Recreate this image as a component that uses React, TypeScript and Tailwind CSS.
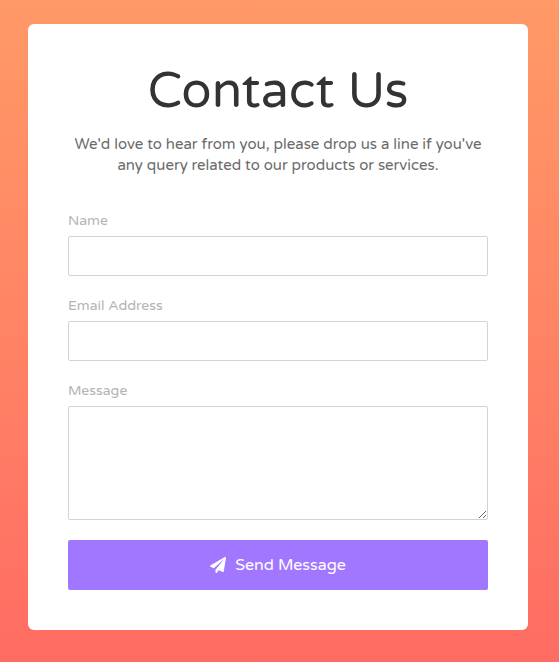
import type { ReactNode } from "react";
import { FaPaperPlane } from "react-icons/fa";

const control =
  "block w-full rounded-xs border border-[#d4d4d4] bg-white px-3 text-[15px] text-[#333] outline-none focus:border-[#a177ff]";

function Field({ id, label, children }: { id: string; label: string; children: ReactNode }) {
  return (
    <div className="flex flex-col gap-[5px]">
      <label htmlFor={id} className="text-sm leading-5 text-[#b4b4b4]">
        {label}
      </label>
      {children}
    </div>
  );
}

export default function App() {
  return (
    <main className="min-h-screen bg-linear-to-b from-[#ff9966] to-[#ff6c63] pt-6 pr-[31px] pb-8 pl-7 font-['Varela_Round','Noto_Sans',sans-serif]">
      <section className="mx-auto max-w-[500px] rounded-md bg-white p-10">
        <h1 className="mb-4 text-center text-[50px] leading-[54px] text-[#333]">
          Contact Us
        </h1>
        <p className="mb-[35px] text-center text-[15px] leading-[21px] text-[#6b6b6b]">
          We'd love to hear from you, please drop us a line if you've any query related to our
          products or services.
        </p>
        <form className="flex flex-col gap-5" onSubmit={(event) => event.preventDefault()}>
          <Field id="name" label="Name">
            <input id="name" type="text" className={`${control} h-10`} />
          </Field>
          <Field id="email" label="Email Address">
            <input id="email" type="email" className={`${control} h-10`} />
          </Field>
          <Field id="message" label="Message">
            <textarea id="message" className={`${control} h-[114px] resize py-2`} />
          </Field>
          <button
            type="submit"
            className="flex h-[50px] w-full items-center justify-center gap-[9px] rounded-xs bg-[#a177ff] text-base text-white"
          >
            <FaPaperPlane aria-hidden="true" />
            Send Message
          </button>
        </form>
      </section>
    </main>
  );
}
